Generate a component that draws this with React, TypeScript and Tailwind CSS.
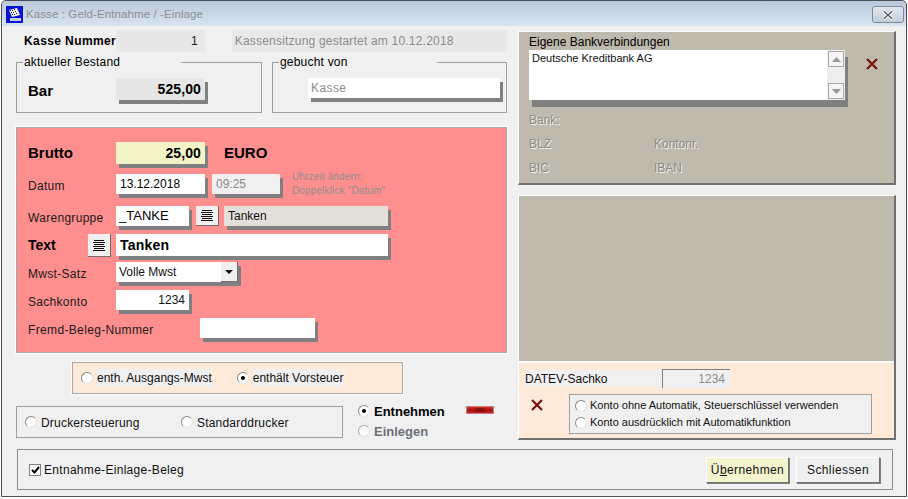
import React from 'react';

const shadow = 'shadow-[3px_4px_0_#808080]';

function Radio({ checked = false, className = '' }: { checked?: boolean; className?: string }) {
  return (
    <span
      className={`flex h-[12px] w-[12px] shrink-0 items-center justify-center rounded-full border border-t-[#8a8a8a] border-l-[#8a8a8a] border-r-[#e4e4e4] border-b-[#e4e4e4] bg-white ${className}`}
    >
      {checked && <span className="h-[4px] w-[4px] rounded-full bg-black" />}
    </span>
  );
}

function LinesButton({ className = '' }: { className?: string }) {
  return (
    <div className={`flex items-center justify-center border-r border-b border-[#707070] bg-[#f0f0f0] ${className}`}>
      <svg width="12" height="11" viewBox="0 0 12 11">
        <path d="M1 .5h10M0 2.5h12M1 4.5h10M0 6.5h12M1 8.5h10M0 10.5h12" stroke="#111" strokeWidth="1" />
      </svg>
    </div>
  );
}

function RedX({ className = '' }: { className?: string }) {
  return (
    <svg width="12" height="12" viewBox="0 0 12 12" className={className}>
      <path d="M1 1l10 10M11 1L1 11" stroke="#7b0f0f" strokeWidth="2.2" />
    </svg>
  );
}

function Group({ title, gap, className = '', children }: { title: string; gap: number; className?: string; children: React.ReactNode }) {
  return (
    <div className={`relative border border-[#a0a0a0] ${className}`}>
      <span className="absolute top-[-8px] left-[6px] bg-[#f0f0f0] pl-[1px] leading-[14px] tracking-[0.2px] text-black" style={{ width: gap }}>
        {title}
      </span>
      {children}
    </div>
  );
}

function FormLabel({ children }: { children: React.ReactNode }) {
  return <span className="mt-[3px] w-[88px] shrink-0 tracking-[0.3px] text-[#1a1a1a]">{children}</span>;
}

function TextField({ className = '', children }: { className?: string; children?: React.ReactNode }) {
  return <div className={`flex h-[20px] items-center px-[4px] ${shadow} ${className}`}>{children}</div>;
}

export default function App() {
  return (
    <div className="h-[499px] w-[908px] overflow-hidden bg-white font-['Liberation_Sans',Arial,sans-serif] text-[12px]">
      <div className="ml-[1px] flex h-[497px] w-[906px] flex-col rounded-t-[5px] border border-[#4a4f55] bg-[#d9e4f0]">
        {/* title bar */}
        <div className="flex h-[25px] shrink-0 items-start rounded-t-[5px] bg-gradient-to-b from-[#b9c8d8] to-[#d8e4f1] pt-[5px] pr-[2px] pl-[4px]">
          <svg width="17" height="17" viewBox="0 0 17 17" className="shrink-0">
            <rect width="17" height="17" fill="#0a12d8" />
            <path d="M3 4l8-2 3 7-8 2z" fill="#f4f4f4" />
            <path d="M4 4h1v1H4zM6 4h1v1H6zM8 3h1v1H8zM5 6h1v1H5zM7 6h1v1H7zM9 5h1v1H9zM6 8h1v1H6zM8 8h1v1H8zM10 7h1v1h-1z" fill="#111" />
            <rect x="4" y="12" width="11" height="3" fill="#c8d0e0" />
          </svg>
          <span className="ml-[3px] text-[11.5px] leading-[16px] tracking-[0.1px] text-[#8e8e8e]">Kasse : Geld-Entnahme / -Einlage</span>
          <div className="ml-auto flex h-[17px] w-[32px] items-center justify-center rounded-[3px] border border-[#7d8a98] bg-gradient-to-b from-[#dfe6ee] to-[#c4cfdb]">
            <svg width="12" height="10" viewBox="0 0 12 10">
              <path d="M2 1.5l8 7M10 1.5l-8 7" stroke="#fff" strokeWidth="3.4" />
              <path d="M2 1.5l8 7M10 1.5l-8 7" stroke="#4a5560" strokeWidth="1.4" />
            </svg>
          </div>
        </div>

        {/* dialog body */}
        <div className="flex h-[470px] flex-col bg-[#f0f0f0] pl-[14px]">
          <div className="flex gap-[11px]">
            {/* left column */}
            <div className="flex h-[414px] w-[491px] shrink-0 flex-col pt-[4px]">
              <div className="flex h-[22px] items-center">
                <span className="ml-[8px] w-[92px] shrink-0 whitespace-nowrap text-[12px] font-bold leading-none tracking-[0.4px] text-black">Kasse Nummer</span>
                <div className="flex h-[22px] w-[89px] items-center justify-end bg-[#e8e8e8] pr-[7px] text-[#1a1a30]">1</div>
                <div className="ml-[27px] flex h-[22px] w-[276px] items-center bg-[#e8e8e8] pl-[3px] tracking-[0.2px] text-[#8c8c8c]">
                  Kassensitzung gestartet am 10.12.2018
                </div>
              </div>

              <div className="mt-[10px] flex gap-[10px]">
                <Group title="aktueller Bestand" gap={158} className="h-[51px] w-[246px]">
                  <div className="flex h-full items-start pt-[15px]">
                    <span className="mt-[5px] ml-[11px] w-[88px] text-[15px] font-bold leading-none text-black">Bar</span>
                    <div className={`flex h-[22px] w-[89px] items-center justify-end bg-[#e6e6e6] pr-[4px] text-[14px] font-bold tracking-[0.1px] text-black ${shadow}`}>525,00</div>
                  </div>
                </Group>
                <Group title="gebucht von" gap={158} className="h-[51px] w-[235px]">
                  <div className="pt-[15px] pl-[35px]">
                    <TextField className="w-[192px] bg-white pl-[3px] text-[#8c8c8c]">
                      <span className="tracking-[0.4px]">Kasse</span>
                    </TextField>
                  </div>
                </Group>
              </div>

              {/* red form */}
              <div className="mt-[14px] flex h-[226px] shrink-0 flex-col border border-[#a8a8a8] bg-[#ff8e8e] pl-[11px] outline outline-white">
                <div className="mt-[14px] flex h-[22px] items-center">
                  <span className="w-[88px] text-[15px] font-bold text-black">Brutto</span>
                  <div className={`flex h-[22px] w-[89px] items-center justify-end bg-[#f3f3c8] pr-[4px] text-[14px] font-bold tracking-[0.1px] text-black ${shadow}`}>25,00</div>
                  <span className="ml-[19px] text-[15px] font-bold text-black">EURO</span>
                </div>
                <div className="mt-[10px] flex h-[20px] items-center">
                  <FormLabel>Datum</FormLabel>
                  <TextField className="w-[89px] bg-white text-[12px] text-black">13.12.2018</TextField>
                  <TextField className="ml-[7px] w-[68px] bg-[#f0f0f0] text-[12px] text-[#8c8c8c]">09:25</TextField>
                  <div className="ml-[12px] text-[10px] leading-[14px] tracking-[0.15px] text-[#8f8f8f]">
                    <p>Uhrzeit ändern:</p>
                    <p>Doppelklick "Datum"</p>
                  </div>
                </div>
                <div className="mt-[12px] flex h-[20px] items-center">
                  <FormLabel>Warengruppe</FormLabel>
                  <TextField className="w-[73px] bg-white pl-[3px] text-[13px] text-black">_TANKE</TextField>
                  <LinesButton className="ml-[7px] h-[20px] w-[23px]" />
                  <TextField className="ml-[5px] w-[164px] bg-[#e3e0dc] text-[12px] text-[#111]">Tanken</TextField>
                </div>
                <div className="mt-[8px] flex h-[23px] items-start">
                  <span className="w-[60px] text-[14px] font-bold leading-[23px] text-black">Text</span>
                  <LinesButton className="h-[23px] w-[23px]" />
                  <div className={`ml-[5px] flex h-[22px] w-[272px] items-center bg-white pl-[4px] text-[14px] font-bold tracking-[0.2px] text-black ${shadow}`}>Tanken</div>
                </div>
                <div className="mt-[5px] flex h-[20px] items-center">
                  <FormLabel>Mwst-Satz</FormLabel>
                  <div className={`flex h-[20px] w-[122px] items-center justify-between bg-white pl-[3px] text-[#111] ${shadow}`}>
                    <span className="-mt-[1px]">Volle Mwst</span>
                    <span className="flex h-[20px] w-[17px] items-center justify-center border-r border-b border-[#707070] bg-[#f0f0f0]">
                      <svg width="8" height="4" viewBox="0 0 8 4"><path d="M0 0h8L4 4z" fill="#111" /></svg>
                    </span>
                  </div>
                </div>
                <div className="mt-[8px] flex h-[20px] items-center">
                  <FormLabel>Sachkonto</FormLabel>
                  <TextField className="w-[73px] justify-end bg-white text-[#111]">1234</TextField>
                </div>
                <div className="mt-[8px] flex h-[20px] items-center">
                  <span className="mt-[3px] w-[172px] shrink-0 tracking-[0.35px] text-[#1a1a1a]">Fremd-Beleg-Nummer</span>
                  <TextField className="w-[115px] bg-white" />
                </div>
              </div>

              <div className="mt-[9px] ml-[56px] flex h-[32px] w-[331px] shrink-0 items-center border border-[#a8a8a8] bg-[#ffe9d8] pl-[8px] outline outline-white/70">
                <Radio />
                <span className="ml-[4px] bg-[#f0f0f0] text-[#111]">enth. Ausgangs-Mwst</span>
                <Radio checked className="ml-[25px]" />
                <span className="ml-[4px] bg-[#f0f0f0] text-[#111]">enthält Vorsteuer</span>
              </div>

              <div className="mt-[12px] flex h-[32px] shrink-0">
                <div className="flex h-[32px] w-[327px] items-center border border-[#a0a0a0] pl-[8px] tracking-[0.2px]">
                  <Radio />
                  <span className="mt-[1px] ml-[4px] w-[98px] whitespace-nowrap text-[#111]">Druckersteuerung</span>
                  <Radio className="ml-[42px]" />
                  <span className="mt-[1px] ml-[4px] text-[#111]">Standarddrucker</span>
                </div>
                <div className="-mt-[5px] ml-[15px] flex flex-col">
                  <div className="flex h-[20px] shrink-0 items-center">
                    <Radio checked />
                    <span className="mt-[2px] ml-[4px] w-[92px] text-[13px] font-bold text-black">Entnehmen</span>
                    <span className="mb-[3px] flex h-[8px] w-[28px] items-center justify-center border border-[#c98080] bg-gradient-to-b from-[#d83030] via-[#a81010] to-[#c82020]">
                      <span className="h-[4px] w-[10px] rounded-full bg-[#8a1010]" />
                    </span>
                  </div>
                  <div className="flex h-[20px] shrink-0 items-center">
                    <Radio className="opacity-70" />
                    <span className="mt-[2px] ml-[4px] text-[13px] font-bold text-[#6e7078]">Einlegen</span>
                  </div>
                </div>
              </div>
            </div>

            {/* right column */}
            <div className="flex w-[378px] shrink-0 flex-col pt-[5px]">
              <div className="h-[154px] border-t border-l border-white border-r-2 border-b-2 border-r-[#707070] border-b-[#707070] bg-[#bfbaae] pl-[10px]">
                <p className="mt-[3px] h-[15px] leading-[14px] text-black">Eigene Bankverbindungen</p>
                <div className="flex items-start">
                  <div className="flex h-[50px] w-[316px] justify-between bg-white text-[#111] shadow-[3px_7px_0_#808080]">
                    <span className="pl-[3px] text-[11px] leading-[16px]">Deutsche Kreditbank AG</span>
                    <div className="flex w-[18px] flex-col justify-between bg-[#eeeeee] p-[1px]">
                      <span className="flex h-[16px] items-center justify-center border border-[#a8a8a8] bg-[#f4f4f4]">
                        <svg width="9" height="5" viewBox="0 0 9 5"><path d="M0 5h9L4.5 0z" fill="#9a9a9a" /></svg>
                      </span>
                      <span className="flex h-[16px] items-center justify-center border border-[#a8a8a8] bg-[#f4f4f4]">
                        <svg width="9" height="5" viewBox="0 0 9 5"><path d="M0 0h9L4.5 5z" fill="#9a9a9a" /></svg>
                      </span>
                    </div>
                  </div>
                  <RedX className="mt-[8px] ml-[21px]" />
                </div>
                <div className="mt-[13px] flex flex-col gap-[10px] text-[12px] leading-[14px] text-[#8e8a82] [text-shadow:1px_1px_0_#f4f2ee]">
                  <p>Bank:</p>
                  <div className="flex"><span className="w-[125px]">BLZ</span><span>Kontonr.</span></div>
                  <div className="flex"><span className="w-[125px]">BIC</span><span>IBAN</span></div>
                </div>
              </div>

              <div className="mt-[10px] flex h-[245px] flex-col border-t border-l border-white border-r-2 border-b-2 border-r-[#707070] border-b-[#707070] bg-[#ffe9d8]">
                <div className="h-[167px] border-b-2 border-white bg-[#bfbaae]" />
                <div className="mt-[6px] ml-[6px] flex h-[19px] items-center">
                  <span className="flex h-[17px] w-[137px] items-center bg-[#f0f0f0] text-[12px] text-[#111]">DATEV-Sachko</span>
                  <div className="flex h-[19px] w-[68px] items-center justify-end border-t border-l border-[#808080] bg-[#f0f0f0] pr-[5px] text-[#8c8c8c]">1234</div>
                </div>
                <div className="mt-[6px] flex items-start">
                  <RedX className="mt-[5px] ml-[12px]" />
                  <div className="ml-[26px] flex h-[40px] w-[303px] flex-col justify-center gap-[5px] border border-[#a0a0a0] bg-[#f0f0f0] pl-[5px] text-[11px] text-[#111]">
                    <div className="flex h-[12px] items-center"><Radio /><span className="ml-[3px]">Konto ohne Automatik, Steuerschlüssel verwenden</span></div>
                    <div className="flex h-[12px] items-center"><Radio /><span className="ml-[3px]">Konto ausdrücklich mit Automatikfunktion</span></div>
                  </div>
                </div>
              </div>
            </div>
          </div>

          {/* bottom bar */}
          <div className="mt-[9px] ml-[1px] flex h-[41px] w-[876px] items-center border border-[#8c8c8c] bg-[#f0f0f0] pr-[12px] pl-[11px]">
            <span className="flex h-[12px] w-[12px] items-center justify-center border border-[#808080] bg-white">
              <svg width="9" height="8" viewBox="0 0 9 8"><path d="M1 4l2.5 2.5L8 1" fill="none" stroke="#000" strokeWidth="2" /></svg>
            </span>
            <span className="ml-[3px] tracking-[0.3px] text-[#111]">Entnahme-Einlage-Beleg</span>
            <button type="button" className="ml-auto h-[26px] w-[83px] border border-white border-r-[#707070] border-b-[#707070] bg-[#f3f3cd] text-[12px] text-[#111] shadow-[1px_1px_0_#808080]">
              <span className="tracking-[0.4px]">Ü<u>b</u>ernehmen</span>
            </button>
            <button type="button" className="ml-[7px] h-[26px] w-[84px] border border-white border-r-[#707070] border-b-[#707070] bg-[#f0f0f0] text-[12px] text-[#111] shadow-[1px_1px_0_#808080]">
              <span className="tracking-[0.4px]">Schliessen</span>
            </button>
          </div>
        </div>
      </div>
    </div>
  );
}
